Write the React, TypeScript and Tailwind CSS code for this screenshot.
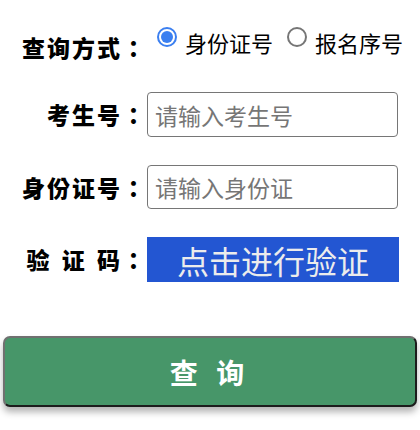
import { useState } from 'react';

function Label({ text, wide }: { text: string; wide?: boolean }) {
  return (
    <div
      className={`w-[147px] shrink-0 text-right font-['Noto_Sans_CJK_TC',sans-serif] text-[23px] font-black tracking-[2px] text-black ${
        wide ? '[word-spacing:3px]' : ''
      }`}
    >
      {text}
    </div>
  );
}

function Radio({ checked, onClick, label }: { checked: boolean; onClick: () => void; label: string }) {
  return (
    <label className="flex items-start cursor-pointer" onClick={onClick}>
      <span
        className={`mt-[1px] flex h-[20px] w-[20px] shrink-0 items-center justify-center rounded-full border-2 ${
          checked ? 'border-[#3b7ff0]' : 'border-[#767676]'
        }`}
      >
        {checked && <span className="h-[12px] w-[12px] rounded-full bg-[#3b7ff0]" />}
      </span>
      <span className="ml-[8px] mt-[2px] text-[22px] leading-[28px] text-black">{label}</span>
    </label>
  );
}

export default function App() {
  const [mode, setMode] = useState<'id' | 'seq'>('id');

  return (
    <div className="h-[430px] w-[420px] overflow-hidden bg-white font-['Noto_Sans_CJK_SC',sans-serif]">
      <div className="mt-[26px] flex h-[40px] items-start">
        <div className="mt-[4px]">
          <Label text="查询方式：" />
        </div>
        <div className="ml-[10px] flex items-start gap-[14px]">
          <Radio checked={mode === 'id'} onClick={() => setMode('id')} label="身份证号" />
          <Radio checked={mode === 'seq'} onClick={() => setMode('seq')} label="报名序号" />
        </div>
      </div>

      <div className="mt-[26px] flex h-[45px] items-center">
        <Label text="考生号：" />
        <input
          placeholder="请输入考生号"
          className="h-[45px] w-[251px] rounded-[4px] border border-[#767676] px-[7px] text-[23px] text-black outline-none placeholder:text-[#767676]"
        />
      </div>

      <div className="mt-[28px] flex h-[44px] items-center">
        <Label text="身份证号：" />
        <input
          placeholder="请输入身份证"
          className="h-[44px] w-[251px] rounded-[4px] border border-[#767676] px-[7px] text-[23px] text-black outline-none placeholder:text-[#767676]"
        />
      </div>

      <div className="mt-[28px] flex h-[45px] items-center">
        <Label text="验 证 码：" wide />
        <button className="flex h-[45px] w-[252px] items-center justify-center bg-[#2356d2] text-[32px] text-[#ececec]">
          点击进行验证
        </button>
      </div>

      <div className="mx-[3px] mt-[54px]">
        <button className="flex h-[71px] w-full items-center justify-center rounded-[7px] border-2 border-t-[#707070] border-l-[#707070] border-r-[#1c1c1c] border-b-[#1c1c1c] bg-[#479669] text-[28px] font-bold tracking-[6px] text-white shadow-[0_5px_7px_rgba(0,0,0,0.3)]">
          查 询
        </button>
      </div>
    </div>
  );
}
